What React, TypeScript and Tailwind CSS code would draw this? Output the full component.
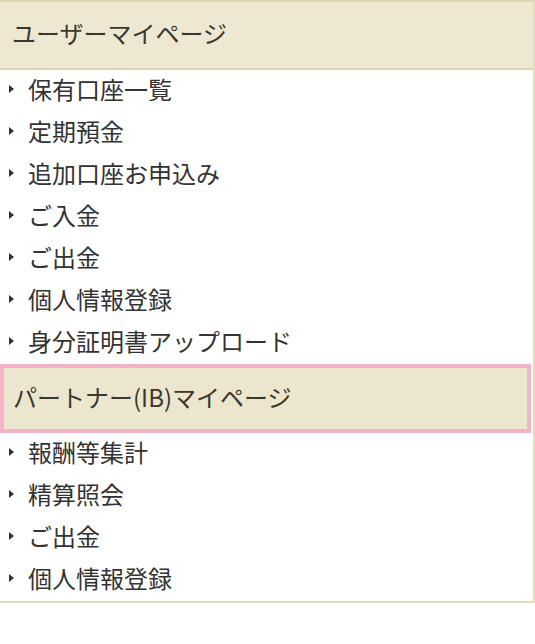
import React from "react";

const userItems = [
  "保有口座一覧",
  "定期預金",
  "追加口座お申込み",
  "ご入金",
  "ご出金",
  "個人情報登録",
  "身分証明書アップロード",
];

const partnerItems = ["報酬等集計", "精算照会", "ご出金", "個人情報登録"];

const MenuItem = ({ label }: { label: string }) => (
  <li className="h-[42px] flex items-center pb-[4px]">
    <span className="w-0 h-0 ml-[9px] mr-[14px] border-y-[4px] border-y-transparent border-l-[5px] border-l-[#333]" />
    <span>{label}</span>
  </li>
);

const App = () => {
  return (
    <div
      className="w-[535px] h-[644px] bg-white text-[#333] text-[24px] leading-none"
      style={{ fontFamily: '"Noto Sans CJK JP", "Noto Sans", sans-serif' }}
    >
      <div className="w-[535px] border-r-2 border-b-2 border-[#e2ddbd]">
        {/* user section */}
        <div className="h-[70px] flex items-center pl-3 pb-[4px] bg-[#eee8d3] border-t-2 border-t-[#ddd6b0] border-b-2 border-b-[#dcd4ab] text-[#3a382e]">
          ユーザーマイページ
        </div>
        <ul>
          {userItems.map((item) => (
            <MenuItem key={item} label={item} />
          ))}
        </ul>

        {/* partner section */}
        <div className="h-[69px] flex items-center pl-[9px] pb-[3px] bg-[#ede6cf] border-4 border-[#f5b3c8] mr-[2px] text-[#3a382e]">
          パートナー(IB)マイページ
        </div>
        <ul>
          {partnerItems.map((item, i) => (
            <MenuItem key={i} label={item} />
          ))}
        </ul>
      </div>
    </div>
  );
};

export default App;
